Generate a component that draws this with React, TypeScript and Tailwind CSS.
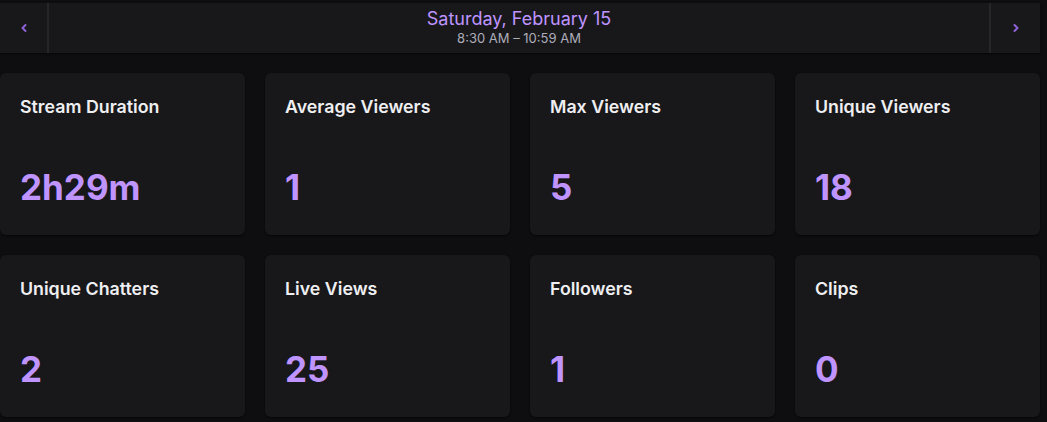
import React from 'react';

interface Stat {
  label: string;
  value: string;
}

const stats: Stat[] = [
  { label: 'Stream Duration', value: '2h29m' },
  { label: 'Average Viewers', value: '1' },
  { label: 'Max Viewers', value: '5' },
  { label: 'Unique Viewers', value: '18' },
  { label: 'Unique Chatters', value: '2' },
  { label: 'Live Views', value: '25' },
  { label: 'Followers', value: '1' },
  { label: 'Clips', value: '0' },
];

const Chevron = ({ dir }: { dir: 'left' | 'right' }) => (
  <svg width="8" height="10" viewBox="0 0 8 10" fill="none">
    <path
      d={dir === 'left' ? 'M5.5 2 L2.5 5 L5.5 8' : 'M2.5 2 L5.5 5 L2.5 8'}
      stroke="#8c62d6"
      strokeWidth="2"
      strokeLinecap="round"
      strokeLinejoin="round"
    />
  </svg>
);

const StatCard = ({ stat }: { stat: Stat }) => (
  <div className="h-[162px] rounded-md bg-[#18181b] px-5 pt-[22px] shadow-[0_1px_2px_rgba(0,0,0,0.6)] flex flex-col">
    <div className="text-[17.8px] leading-6 font-semibold text-[#efeff1]">{stat.label}</div>
    <div className="mt-[46px] text-[35px] leading-[44px] font-bold text-[#bf94ff]">{stat.value}</div>
  </div>
);

export default function App() {
  return (
    <div
      className="min-h-[422px] w-[1047px] bg-[#0e0e10] pt-[3px]"
      style={{ fontFamily: 'Inter, "Noto Sans", sans-serif' }}
    >
      <div className="w-[1040px]">
        <div className="flex h-[50px] bg-[#18181b] shadow-[0_1px_2px_rgba(0,0,0,0.6)]">
          <button className="flex w-[49px] items-center justify-center border-r-2 border-[#26262a]">
            <Chevron dir="left" />
          </button>
          <div className="flex flex-1 flex-col items-center justify-center pb-[2px]">
            <div className="text-[18px] leading-[22px] text-[#bf94ff]">Saturday, February 15</div>
            <div className="text-[13px] leading-4 text-[#adadb8]">8:30 AM – 10:59 AM</div>
          </div>
          <button className="flex w-[51px] items-center justify-center border-l-2 border-[#26262a]">
            <Chevron dir="right" />
          </button>
        </div>

        <div className="mt-5 grid grid-cols-4 gap-5">
          {stats.map(s => (
            <StatCard key={s.label} stat={s} />
          ))}
        </div>
      </div>
    </div>
  );
}
